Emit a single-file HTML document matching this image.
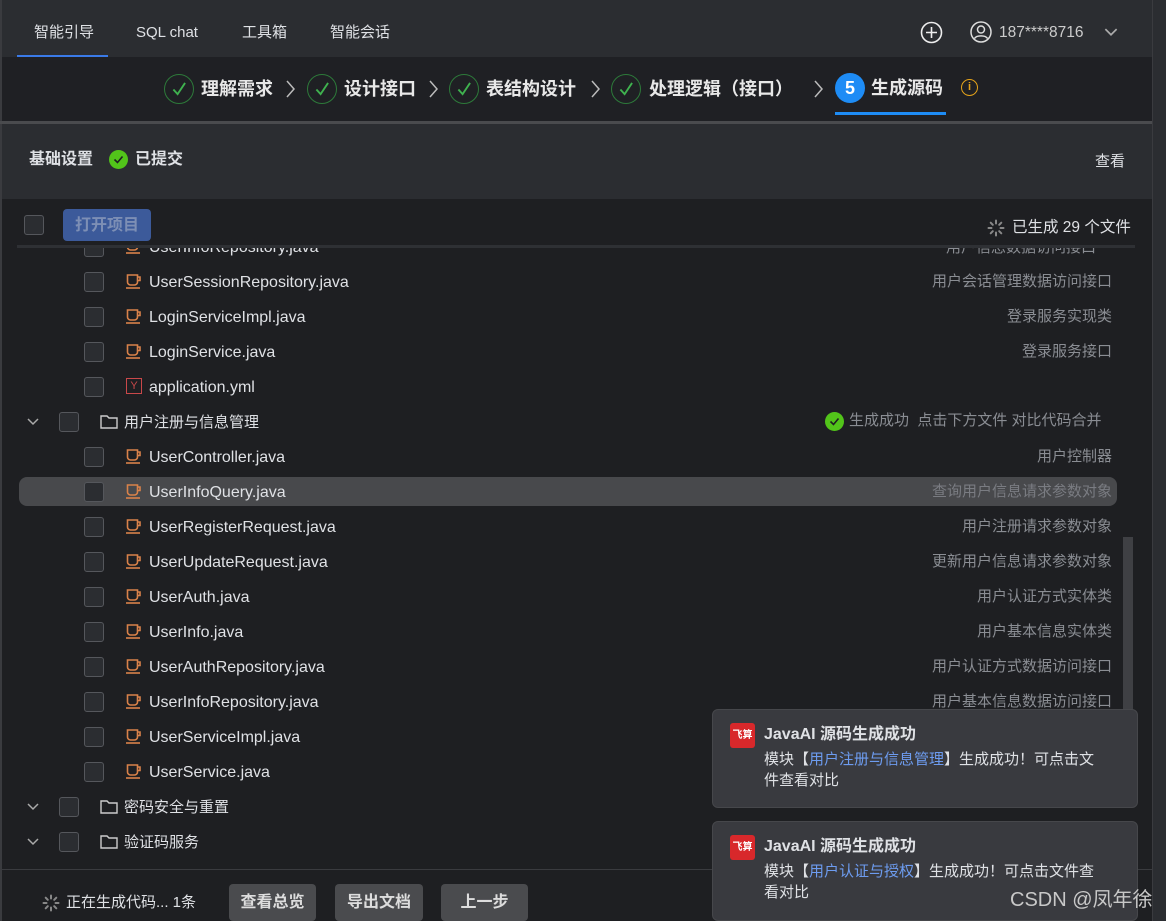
<!DOCTYPE html>
<html><head><meta charset="utf-8"><style>
*{margin:0;padding:0;box-sizing:border-box}
body{width:1166px;height:921px;overflow:hidden;background:#1e1f22;font-family:"Liberation Sans","Noto Sans CJK SC",sans-serif;color:#dfe1e5;position:relative}
.abs{position:absolute}
.top{left:0;top:0;width:1152px;height:57px;background:#2b2d31;border-left:2px solid #3a3b3f}
.tab{top:23px;font-size:15px;color:#dfe1e5;line-height:20px}
.steps{left:0;top:57px;width:1152px;height:64px;background:#1f2024;border-left:2px solid #3a3b3f}
.gline{left:0;top:121px;width:1152px;height:3px;background:#4a4b4e}
.sec{left:0;top:124px;width:1152px;height:75px;background:#2b2d31;border-left:2px solid #3a3b3f}
.list{left:0;top:199px;width:1152px;height:722px;border-left:2px solid #3a3b3f}
.right{left:1152px;top:0;width:14px;height:921px;background:#2b2d31;border-left:1px solid #3a3b3f}
.ck{width:20px;height:20px;border:1px solid #55575c;border-radius:3px;background:#2b2d31}
.stc{width:30px;height:30px;border:1.5px solid #2d7a3a;border-radius:50%}
.stt{font-size:18px;font-weight:bold;color:#e8e8e8;line-height:24px}
.row{font-size:16px;line-height:20px;color:#dfe1e5;margin-top:1px}
.desc{right:54px;color:#8a8d93;font-size:15px;line-height:20px;text-align:right;margin-top:1px}
.toast{left:712px;width:426px;background:#393a3f;border-radius:6px;border:1px solid #46474b}
.logo{width:25px;height:25px;background:#d8282b;border-radius:3px;color:#fff;font-size:10px;font-weight:bold;text-align:center;line-height:25px;overflow:hidden;white-space:nowrap}
.btn{top:884px;height:37px;background:#4a4b4e;border-radius:4px;font-size:16px;font-weight:bold;color:#ddd;text-align:center;line-height:37px}
.cup{width:18px;height:18px}
</style></head><body>
<svg width="0" height="0" style="position:absolute"><defs>
<symbol id="cup" viewBox="0 0 18 18"><path d="M2.5 3h10v7a3 3 0 0 1-3 3h-4a3 3 0 0 1-3-3z M12.5 5h2.5v3.5h-2.5" fill="none" stroke="#d9824a" stroke-width="1.6"/><path d="M1 16h14" stroke="#d9824a" stroke-width="1.6"/></symbol>
<symbol id="chk" viewBox="0 0 30 30"><path d="M9 15.5l4.5 5 8-12" fill="none" stroke="#3fb24f" stroke-width="2"/></symbol>
<symbol id="fold" viewBox="0 0 18 15"><path d="M1 2h6l2 2h8v10H1z" fill="none" stroke="#ccc" stroke-width="1.4"/></symbol>
<symbol id="chev" viewBox="0 0 12 8"><path d="M1 1l5 5 5-5" fill="none" stroke="#aaa" stroke-width="1.5"/></symbol>
<symbol id="arr" viewBox="0 0 10 20"><path d="M2 2l7 8-7 8" fill="none" stroke="#bbb" stroke-width="1.5"/></symbol>
</defs></svg>

<div class="abs top"></div>
<div class="abs tab" style="left:34px">智能引导</div>
<div class="abs" style="left:17px;top:55px;width:91px;height:2px;background:#3a7ae8"></div>
<div class="abs tab" style="left:136px">SQL chat</div>
<div class="abs tab" style="left:242px">工具箱</div>
<div class="abs tab" style="left:330px">智能会话</div>
<svg class="abs" style="left:920px;top:21px" width="23" height="23" viewBox="0 0 23 23"><circle cx="11.5" cy="11.5" r="10" fill="none" stroke="#eee" stroke-width="1.6"/><path d="M11.5 6v11M6 11.5h11" stroke="#eee" stroke-width="1.6"/></svg>
<svg class="abs" style="left:970px;top:21px" width="22" height="22" viewBox="0 0 22 22"><circle cx="11" cy="11" r="10" fill="none" stroke="#ddd" stroke-width="1.5"/><circle cx="11" cy="8.5" r="3.5" fill="none" stroke="#ddd" stroke-width="1.5"/><path d="M4.5 17.5c2-3.5 11-3.5 13 0" fill="none" stroke="#ddd" stroke-width="1.5"/></svg>
<div class="abs" style="left:999px;top:23px;font-size:15.5px;line-height:20px;color:#ccc">187****8716</div>
<svg class="abs" style="left:1104px;top:28px" width="14" height="9"><use href="#chev"/></svg>

<div class="abs steps"></div>
<svg class="abs stc" style="left:164px;top:74px"><use href="#chk"/></svg><div class="abs stt" style="left:201px;top:77px">理解需求</div><svg class="abs" style="left:285px;top:79px" width="10" height="20"><use href="#arr"/></svg>
<svg class="abs stc" style="left:307px;top:74px"><use href="#chk"/></svg><div class="abs stt" style="left:344px;top:77px">设计接口</div><svg class="abs" style="left:428px;top:79px" width="10" height="20"><use href="#arr"/></svg>
<svg class="abs stc" style="left:449px;top:74px"><use href="#chk"/></svg><div class="abs stt" style="left:486px;top:77px">表结构设计</div><svg class="abs" style="left:590px;top:79px" width="10" height="20"><use href="#arr"/></svg>
<svg class="abs stc" style="left:611px;top:74px"><use href="#chk"/></svg><div class="abs stt" style="left:649px;top:77px">处理逻辑（接口）</div><svg class="abs" style="left:813px;top:79px" width="10" height="20"><use href="#arr"/></svg>
<div class="abs" style="left:835px;top:73px;width:30px;height:30px;border-radius:50%;background:#1e8cf5;color:#fff;font-weight:bold;font-size:18px;text-align:center;line-height:30px">5</div>
<div class="abs stt" style="left:871px;top:76px">生成源码</div>
<div class="abs" style="left:835px;top:112px;width:111px;height:3px;background:#1e8cf5"></div>
<div class="abs" style="left:961px;top:79px;width:17px;height:17px;border:1.5px solid #e3a21a;border-radius:50%;color:#e3a21a;font-size:11px;font-weight:bold;text-align:center;line-height:14px">i</div>
<div class="abs gline"></div>

<div class="abs sec"></div>
<div class="abs" style="left:29px;top:149px;font-size:16px;line-height:22px;font-weight:bold">基础设置</div>
<div class="abs" style="left:109px;top:150px;width:19px;height:19px;border-radius:50%;background:#52c41a"><svg width="19" height="19" viewBox="0 0 19 19"><path d="M5.5 9.5l3 3 5-6" fill="none" stroke="#1e1f22" stroke-width="1.6"/></svg></div>
<div class="abs" style="left:135px;top:149px;font-size:16px;line-height:22px;font-weight:bold">已提交</div>
<div class="abs" style="left:1095px;top:152px;font-size:15px;line-height:20px">查看</div>

<div class="abs list"></div>
<div class="abs ck" style="left:24px;top:215px"></div>
<div class="abs" style="left:63px;top:209px;width:88px;height:32px;background:#3c5a9a;border-radius:4px;color:#7d8fb5;font-weight:bold;font-size:16px;text-align:center;line-height:34px">打开项目</div>
<svg class="abs" style="left:987px;top:219px" width="18" height="18" viewBox="0 0 18 18"><g stroke="#888" stroke-width="2" stroke-linecap="round"><path d="M9 1.5v3M9 13.5v3M1.5 9h3M13.5 9h3M3.7 3.7l2.1 2.1M12.2 12.2l2.1 2.1M3.7 14.3l2.1-2.1M12.2 5.8l2.1-2.1"/></g></svg>
<div class="abs" style="left:1012px;top:218px;font-size:15.5px;line-height:20px">已生成 29 个文件</div>

<div class="abs" style="left:19px;top:477px;width:1098px;height:29px;background:#48494c;border-radius:8px"></div>
<div class="abs" style="left:1123px;top:537px;width:10px;height:183px;background:#3f4044"></div>

<div class="abs" style="left:0;top:248px;width:1150px;height:16px;overflow:hidden">
<div class="abs ck" style="left:84px;top:-11px"></div>
<svg class="abs cup" style="left:125px;top:-11px"><use href="#cup"/></svg>
<div class="abs row" style="left:149px;top:-11px">UserInfoRepository.java</div>
<div class="abs desc" style="right:54px;top:-11px">用户信息数据访问接口</div>
</div>
<div class="abs" style="left:17px;top:245px;width:1118px;height:3px;background:#2e3034"></div>

<div class="abs ck" style="left:84px;top:272px"></div><svg class="abs cup" style="left:125px;top:272px"><use href="#cup"/></svg><div class="abs row" style="left:149px;top:272px">UserSessionRepository.java</div><div class="abs desc" style="top:271px">用户会话管理数据访问接口</div>
<div class="abs ck" style="left:84px;top:307px"></div><svg class="abs cup" style="left:125px;top:307px"><use href="#cup"/></svg><div class="abs row" style="left:149px;top:307px">LoginServiceImpl.java</div><div class="abs desc" style="top:306px">登录服务实现类</div>
<div class="abs ck" style="left:84px;top:342px"></div><svg class="abs cup" style="left:125px;top:342px"><use href="#cup"/></svg><div class="abs row" style="left:149px;top:342px">LoginService.java</div><div class="abs desc" style="top:341px">登录服务接口</div>
<div class="abs ck" style="left:84px;top:377px"></div><div class="abs" style="left:126px;top:378px;width:16px;height:16px;border:1.3px solid #c9484a;color:#c9484a;font-size:11px;text-align:center;line-height:14px">Y</div><div class="abs row" style="left:149px;top:377px">application.yml</div>

<svg class="abs" style="left:27px;top:418px" width="12" height="8"><use href="#chev"/></svg><div class="abs ck" style="left:59px;top:412px"></div><svg class="abs" style="left:100px;top:414px" width="18" height="15"><use href="#fold"/></svg><div class="abs row" style="left:124px;top:412px;font-size:15px">用户注册与信息管理</div>
<div class="abs" style="left:825px;top:412px;width:19px;height:19px;border-radius:50%;background:#52c41a"><svg width="19" height="19" viewBox="0 0 19 19"><path d="M5.5 9.5l3 3 5-6" fill="none" stroke="#1e1f22" stroke-width="1.6"/></svg></div><div class="abs" style="left:849px;top:411px;font-size:15px;line-height:20px;color:#8a8d93">生成成功&nbsp; 点击下方文件 对比代码合并</div>

<div class="abs ck" style="left:84px;top:447px"></div><svg class="abs cup" style="left:125px;top:447px"><use href="#cup"/></svg><div class="abs row" style="left:149px;top:447px">UserController.java</div><div class="abs desc" style="top:446px">用户控制器</div>
<div class="abs ck" style="left:84px;top:482px"></div><svg class="abs cup" style="left:125px;top:482px"><use href="#cup"/></svg><div class="abs row" style="left:149px;top:482px">UserInfoQuery.java</div><div class="abs desc" style="top:481px;color:#7a7c82">查询用户信息请求参数对象</div>
<div class="abs ck" style="left:84px;top:517px"></div><svg class="abs cup" style="left:125px;top:517px"><use href="#cup"/></svg><div class="abs row" style="left:149px;top:517px">UserRegisterRequest.java</div><div class="abs desc" style="top:516px">用户注册请求参数对象</div>
<div class="abs ck" style="left:84px;top:552px"></div><svg class="abs cup" style="left:125px;top:552px"><use href="#cup"/></svg><div class="abs row" style="left:149px;top:552px">UserUpdateRequest.java</div><div class="abs desc" style="top:551px">更新用户信息请求参数对象</div>
<div class="abs ck" style="left:84px;top:587px"></div><svg class="abs cup" style="left:125px;top:587px"><use href="#cup"/></svg><div class="abs row" style="left:149px;top:587px">UserAuth.java</div><div class="abs desc" style="top:586px">用户认证方式实体类</div>
<div class="abs ck" style="left:84px;top:622px"></div><svg class="abs cup" style="left:125px;top:622px"><use href="#cup"/></svg><div class="abs row" style="left:149px;top:622px">UserInfo.java</div><div class="abs desc" style="top:621px">用户基本信息实体类</div>
<div class="abs ck" style="left:84px;top:657px"></div><svg class="abs cup" style="left:125px;top:657px"><use href="#cup"/></svg><div class="abs row" style="left:149px;top:657px">UserAuthRepository.java</div><div class="abs desc" style="top:656px">用户认证方式数据访问接口</div>
<div class="abs ck" style="left:84px;top:692px"></div><svg class="abs cup" style="left:125px;top:692px"><use href="#cup"/></svg><div class="abs row" style="left:149px;top:692px">UserInfoRepository.java</div><div class="abs desc" style="top:691px">用户基本信息数据访问接口</div>
<div class="abs ck" style="left:84px;top:727px"></div><svg class="abs cup" style="left:125px;top:727px"><use href="#cup"/></svg><div class="abs row" style="left:149px;top:727px">UserServiceImpl.java</div>
<div class="abs ck" style="left:84px;top:762px"></div><svg class="abs cup" style="left:125px;top:762px"><use href="#cup"/></svg><div class="abs row" style="left:149px;top:762px">UserService.java</div>

<svg class="abs" style="left:27px;top:803px" width="12" height="8"><use href="#chev"/></svg><div class="abs ck" style="left:59px;top:797px"></div><svg class="abs" style="left:100px;top:799px" width="18" height="15"><use href="#fold"/></svg><div class="abs row" style="left:124px;top:797px;font-size:15px">密码安全与重置</div>
<svg class="abs" style="left:27px;top:838px" width="12" height="8"><use href="#chev"/></svg><div class="abs ck" style="left:59px;top:832px"></div><svg class="abs" style="left:100px;top:834px" width="18" height="15"><use href="#fold"/></svg><div class="abs row" style="left:124px;top:832px;font-size:15px">验证码服务</div>

<div class="abs" style="left:0;top:869px;width:1152px;height:1px;background:#3a3b3f"></div>
<svg class="abs" style="left:42px;top:894px" width="18" height="18" viewBox="0 0 18 18"><g stroke="#888" stroke-width="2" stroke-linecap="round"><path d="M9 1.5v3M9 13.5v3M1.5 9h3M13.5 9h3M3.7 3.7l2.1 2.1M12.2 12.2l2.1 2.1M3.7 14.3l2.1-2.1M12.2 5.8l2.1-2.1"/></g></svg>
<div class="abs" style="left:66px;top:893px;font-size:15px;line-height:20px">正在生成代码... 1条</div>
<div class="abs btn" style="left:229px;width:87px">查看总览</div>
<div class="abs btn" style="left:335px;width:88px">导出文档</div>
<div class="abs btn" style="left:441px;width:87px">上一步</div>

<div class="abs toast" style="top:709px;height:99px"></div>
<div class="abs logo" style="left:730px;top:723px">飞算</div>
<div class="abs" style="left:764px;top:724px;font-size:16px;line-height:22px;font-weight:bold">JavaAI 源码生成成功</div>
<div class="abs" style="left:764px;top:749px;width:360px;font-size:15px;line-height:21px;white-space:nowrap">模块【<span style="color:#6d9cf0">用户注册与信息管理</span>】生成成功！可点击文<br>件查看对比</div>
<div class="abs toast" style="top:821px;height:100px"></div>
<div class="abs logo" style="left:730px;top:835px">飞算</div>
<div class="abs" style="left:764px;top:836px;font-size:16px;line-height:22px;font-weight:bold">JavaAI 源码生成成功</div>
<div class="abs" style="left:764px;top:861px;width:360px;font-size:15px;line-height:21px;white-space:nowrap">模块【<span style="color:#6d9cf0">用户认证与授权</span>】生成成功！可点击文件查<br>看对比</div>
<div class="abs" style="left:1010px;top:887px;font-size:20px;line-height:26px;color:#c8c8c8">CSDN @凤年徐</div>
<div class="abs right"></div>
</body></html>
